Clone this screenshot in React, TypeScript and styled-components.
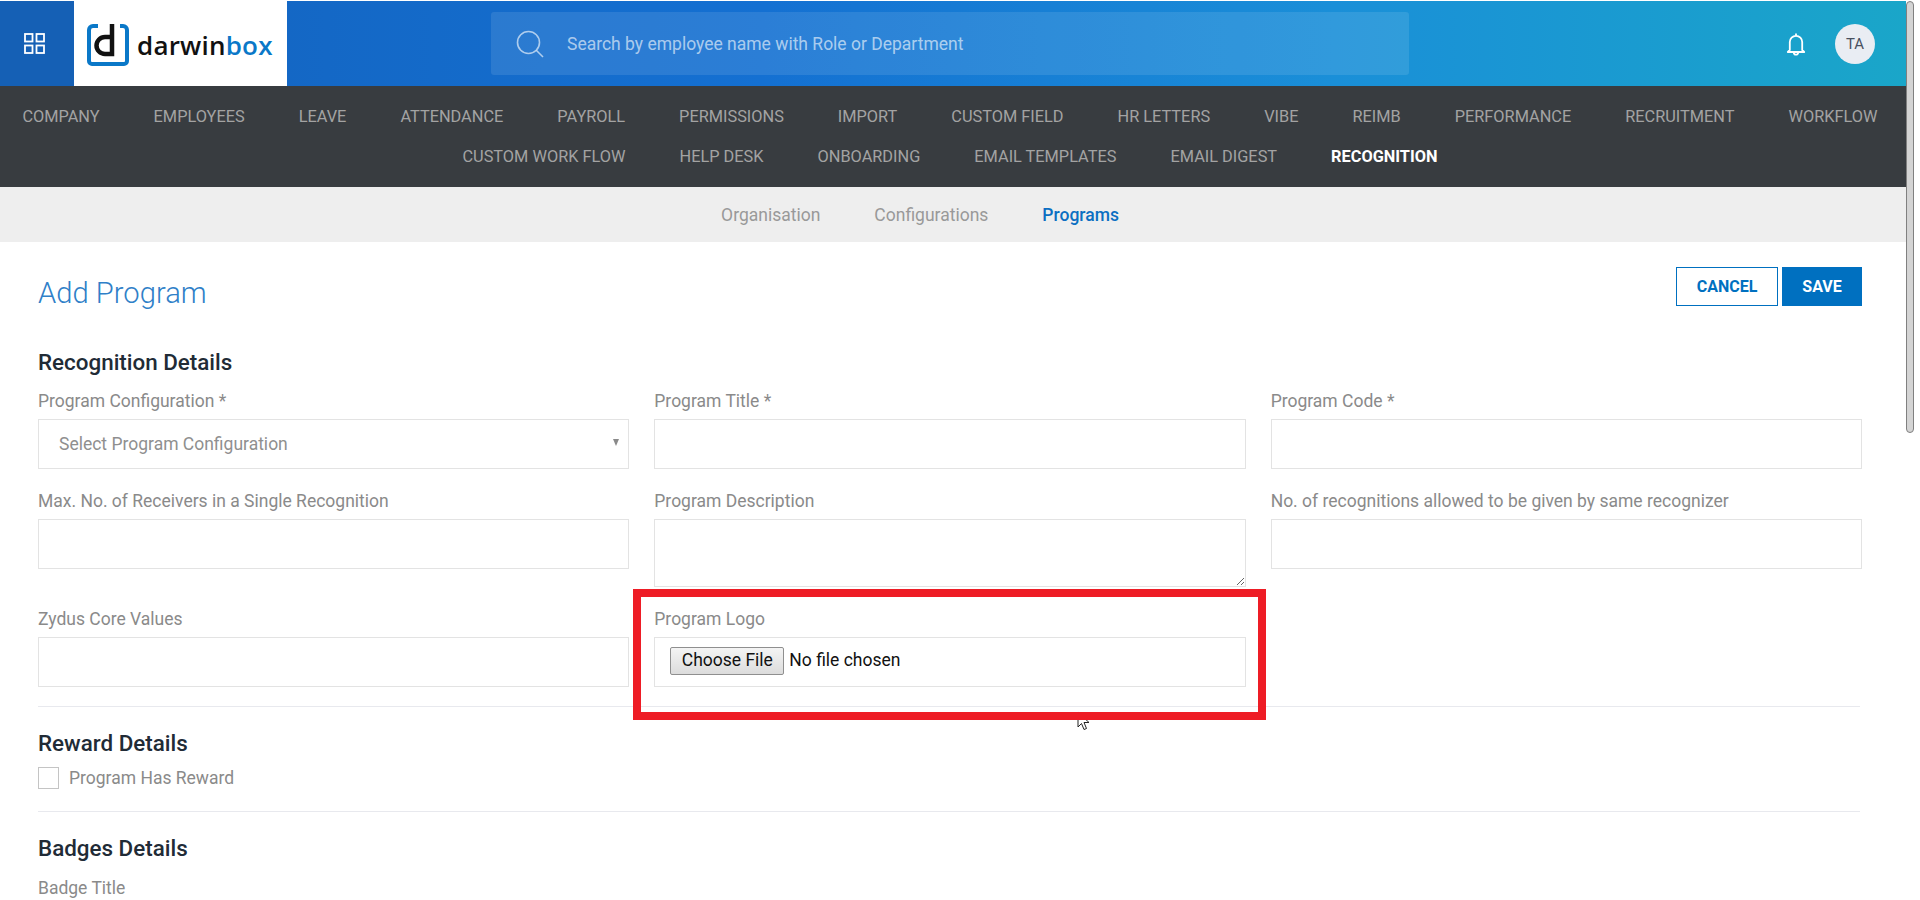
import React from "react";
import styled, { createGlobalStyle } from "styled-components";

const Global = createGlobalStyle`
  html, body { margin: 0; padding: 0; height: 900px; overflow: hidden; background: #fff; }
  * { box-sizing: border-box; }
  body { font-family: Roboto, "Liberation Sans", sans-serif; }
`;

const Page = styled.div`
  position: relative;
  display: flex;
  width: 1920px;
  height: 900px;
  overflow: hidden;
`;
const Main = styled.div`
  width: 1906px;
  flex: none;
  padding-top: 1px;
`;
const Track = styled.div`
  flex: 1;
  padding-top: 1px;
`;
const Thumb = styled.div`
  width: 8px;
  height: 432px;
  background: #d4d4d4;
  border: 1px solid #808080;
  border-radius: 4px;
`;

const Header = styled.header`
  display: flex;
  align-items: stretch;
  height: 85px;
  background: linear-gradient(90deg, #1462bd 0%, #1470d2 40%, #1a8fd8 70%, #1aa6c9 100%);
`;
const GridButton = styled.div`
  width: 74px;
  display: flex;
  align-items: center;
  justify-content: center;
  padding: 0 6px 0 0;
  background: #1560b5;
  color: #fff;
`;
const LogoBox = styled.div`
  width: 213px;
  margin-top: -1px;
  background: #fff;
  display: flex;
  align-items: center;
  padding: 4px 0 0 13px;
  gap: 8px;
`;
const Wordmark = styled.span`
  font-family: "Open Sans", sans-serif;
  font-size: 26px;
  font-weight: 600;
  letter-spacing: 0.2px;
  color: #111;
  b { font-weight: 600; color: #0a78c8; }
`;
const SearchBar = styled.div`
  width: 918px;
  height: 63px;
  margin: 11px 0 0 204px;
  background: rgba(255, 255, 255, 0.1);
  border-radius: 3px;
  display: flex;
  align-items: center;
  padding-left: 25px;
  gap: 23px;
  color: rgba(255, 255, 255, 0.62);
  font-size: 17.5px;
`;
const HeaderRight = styled.div`
  margin-left: auto;
  display: flex;
  align-items: center;
  padding-right: 31px;
  gap: 29px;
  color: #fff;
`;
const Avatar = styled.div`
  width: 40px;
  height: 40px;
  border-radius: 50%;
  background: #e9edf3;
  color: #48505f;
  font-size: 15px;
  display: flex;
  align-items: center;
  justify-content: center;
`;

const Nav = styled.nav`
  height: 101px;
  background: #383c40;
  display: flex;
  flex-wrap: wrap;
  justify-content: center;
  align-content: flex-start;
  column-gap: 54px;
  row-gap: 21px;
  padding: 21px 6px 0 0;
`;
const NavItem = styled.a<{ $active?: boolean }>`
  font-size: 16.33px;
  line-height: 19px;
  color: ${(p) => (p.$active ? "#fff" : "#a3a3a3")};
  font-weight: ${(p) => (p.$active ? 700 : 400)};
`;

const SubBar = styled.div`
  height: 55px;
  background: #eeeeee;
  display: flex;
  align-items: center;
  justify-content: center;
  gap: 54px;
  padding-right: 66px;
`;
const SubTab = styled.a<{ $active?: boolean }>`
  font-size: 17.5px;
  color: ${(p) => (p.$active ? "#0b6fc2" : "#999")};
  font-weight: ${(p) => (p.$active ? 500 : 400)};
`;

const Content = styled.main`
  padding: 25px 44px 0 38px;
`;
const TitleRow = styled.div`
  display: flex;
  align-items: flex-start;
  justify-content: space-between;
  height: 46px;
  margin-bottom: 36px;
`;
const Title = styled.h1`
  margin: 6px 0 0;
  font-size: 29.2px;
  line-height: 40px;
  font-weight: 300;
  color: #2f80c8;
`;
const Actions = styled.div`
  display: flex;
  gap: 4px;
`;
const Button = styled.button<{ $primary?: boolean }>`
  height: 39px;
  width: ${(p) => (p.$primary ? "80px" : "102px")};
  border: 1px solid #0070c0;
  background: ${(p) => (p.$primary ? "#0070c0" : "#fff")};
  color: ${(p) => (p.$primary ? "#fff" : "#0070c0")};
  font: 700 16px Roboto, sans-serif;
  padding: 0;
`;
const SectionTitle = styled.h2`
  margin: 0;
  font-size: 22.4px;
  line-height: 26px;
  font-weight: 500;
  color: #212b36;
`;
const Grid = styled.div`
  display: grid;
  grid-template-columns: repeat(3, 1fr);
  column-gap: 25px;
  row-gap: 20px;
  margin-top: 14px;
`;
const Field = styled.div`
  display: flex;
  flex-direction: column;
`;
const Label = styled.label`
  font-size: 17.5px;
  line-height: 24px;
  height: 30px;
  color: #8a8a8a;
`;
const inputBase = `
  display: block;
  width: 100%;
  height: 50px;
  border: 1px solid #e3e3e3;
  background: #fff;
  outline: none;
`;
const TextInput = styled.input`
  ${inputBase}
`;
const TextArea = styled.textarea`
  ${inputBase}
  height: 68px;
  resize: vertical;
  flex: none;
`;
const SelectWrap = styled.div`
  position: relative;
  &::after {
    content: "";
    position: absolute;
    right: 10px;
    top: 20px;
    border: 3.5px solid transparent;
    border-top: 7px solid #8a8a8a;
    border-bottom: 0;
  }
`;
const Select = styled.select`
  ${inputBase}
  appearance: none;
  padding: 0 20px;
  font: 17.5px Roboto, sans-serif;
  color: #8f8f8f;
`;
const FileBox = styled.div`
  ${inputBase}
  display: flex;
  align-items: center;
  padding: 0 0 3px 15px;
  gap: 5px;
  font-size: 17.5px;
  color: #111;
`;
const FileName = styled.span`
  margin-top: -2px;
`;
const FileButton = styled.button`
  height: 28px;
  width: 114px;
  padding: 0 0 2px;
  border: 1px solid #8f8f8f;
  border-radius: 2px;
  background: linear-gradient(#f4f4f4, #dcdcdc);
  color: #111;
  font: 17.5px Roboto, sans-serif;
`;
const Divider = styled.hr`
  margin: 19px 2px 0 0;
  border: 0;
  border-top: 1px solid #e8e9ee;
`;
const Section = styled.section`
  padding-top: 23px;
`;
const FirstSection = styled.section``;
const CheckRow = styled.label`
  display: flex;
  align-items: center;
  gap: 10px;
  margin-top: 11px;
  height: 22px;
  font-size: 17.5px;
  color: #8a8a8a;
`;
const CheckBox = styled.span`
  width: 21px;
  height: 22px;
  border: 1px solid #c4c4c4;
`;
const CheckDivider = styled(Divider)`
  margin-top: 22px;
`;
const BadgeLabel = styled(Label)`
  display: block;
  margin-top: 15px;
`;

const Highlight = styled.div`
  position: absolute;
  left: 633px;
  top: 589px;
  width: 633px;
  height: 131px;
  border: 8px solid #ee1c25;
  pointer-events: none;
`;
const Cursor = styled.svg`
  position: absolute;
  left: 1077px;
  top: 711px;
`;

const navItems = ["COMPANY","EMPLOYEES","LEAVE","ATTENDANCE","PAYROLL","PERMISSIONS","IMPORT","CUSTOM FIELD","HR LETTERS","VIBE","REIMB","PERFORMANCE","RECRUITMENT","WORKFLOW","CUSTOM WORK FLOW","HELP DESK","ONBOARDING","EMAIL TEMPLATES","EMAIL DIGEST"];

function LabeledField({ label, children }: { label: string; children: React.ReactNode }) {
  return (
    <Field>
      <Label>{label}</Label>
      {children}
    </Field>
  );
}

export default function App() {
  return (
    <Page>
      <Global />
      <Main>
        <Header>
          <GridButton>
            <svg width="21" height="21" viewBox="0 0 21 21" fill="none" stroke="currentColor" strokeWidth="1.8">
              <rect x="1" y="1" width="7.5" height="7.5" />
              <rect x="12.5" y="1" width="7.5" height="7.5" />
              <rect x="1" y="12.5" width="7.5" height="7.5" />
              <rect x="12.5" y="12.5" width="7.5" height="7.5" />
            </svg>
          </GridButton>
          <LogoBox>
            <svg width="42" height="42" viewBox="0 0 42 42" fill="none">
              <path d="M11 2H6a4 4 0 0 0-4 4v31a3 3 0 0 0 3 3h32a3 3 0 0 0 3-3V6a4 4 0 0 0-4-4h-3" stroke="#0a78c8" strokeWidth="4" />
              <path d="M23 13h-5a8.5 8.5 0 0 0 0 17h7V0" stroke="#111" strokeWidth="4.5" />
            </svg>
            <Wordmark>
              darwin<b>box</b>
            </Wordmark>
          </LogoBox>
          <SearchBar>
            <svg width="28" height="28" viewBox="0 0 28 28" fill="none" stroke="currentColor" strokeWidth="1.6">
              <circle cx="12.5" cy="12.5" r="11" />
              <path d="M20.5 20.5L27 27" />
            </svg>
            <span>Search by employee name with Role or Department</span>
          </SearchBar>
          <HeaderRight>
            <svg width="20" height="24" viewBox="0 0 20 24" fill="none" stroke="currentColor" strokeWidth="1.8">
              <path d="M10 1.5v2M3.8 18V10a6.2 6.2 0 0 1 12.4 0v8l2 2H1.8z" strokeLinejoin="round" />
              <path d="M7.8 20.5a2.2 2.2 0 0 0 4.4 0" />
            </svg>
            <Avatar>TA</Avatar>
          </HeaderRight>
        </Header>
        <Nav>
          {navItems.map((n) => (
            <NavItem key={n}>{n}</NavItem>
          ))}
          <NavItem $active>RECOGNITION</NavItem>
        </Nav>
        <SubBar>
          <SubTab>Organisation</SubTab>
          <SubTab>Configurations</SubTab>
          <SubTab $active>Programs</SubTab>
        </SubBar>
        <Content>
          <TitleRow>
            <Title>Add Program</Title>
            <Actions>
              <Button>CANCEL</Button>
              <Button $primary>SAVE</Button>
            </Actions>
          </TitleRow>
          <FirstSection>
            <SectionTitle>Recognition Details</SectionTitle>
            <Grid>
              <LabeledField label="Program Configuration *">
                <SelectWrap>
                  <Select defaultValue="">
                    <option value="">Select Program Configuration</option>
                  </Select>
                </SelectWrap>
              </LabeledField>
              <LabeledField label="Program Title *">
                <TextInput />
              </LabeledField>
              <LabeledField label="Program Code *">
                <TextInput />
              </LabeledField>
              <LabeledField label="Max. No. of Receivers in a Single Recognition">
                <TextInput />
              </LabeledField>
              <LabeledField label="Program Description">
                <TextArea />
              </LabeledField>
              <LabeledField label="No. of recognitions allowed to be given by same recognizer">
                <TextInput />
              </LabeledField>
              <LabeledField label="Zydus Core Values">
                <TextInput />
              </LabeledField>
              <LabeledField label="Program Logo">
                <FileBox>
                  <FileButton>Choose File</FileButton>
                  <FileName>No file chosen</FileName>
                </FileBox>
              </LabeledField>
            </Grid>
            <Divider />
          </FirstSection>
          <Section>
            <SectionTitle>Reward Details</SectionTitle>
            <CheckRow>
              <CheckBox />
              Program Has Reward
            </CheckRow>
            <CheckDivider />
          </Section>
          <Section>
            <SectionTitle>Badges Details</SectionTitle>
            <BadgeLabel>Badge Title</BadgeLabel>
          </Section>
        </Content>
      </Main>
      <Track>
        <Thumb />
      </Track>
      <Cursor width="14" height="22" viewBox="0 0 14 22" fill="#fff" stroke="#222" strokeWidth="1">
        <path d="M1 1v15l3.5-3.5 2.5 6 2.5-1-2.5-6h5z" />
      </Cursor>
      <Highlight />
    </Page>
  );
}
